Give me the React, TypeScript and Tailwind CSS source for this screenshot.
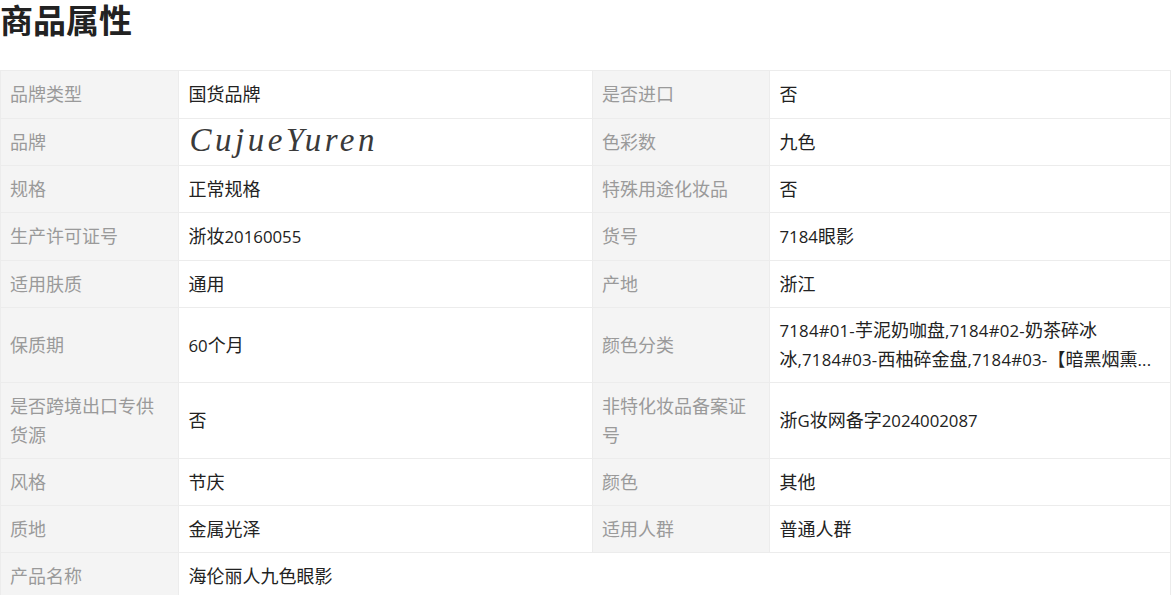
import React from 'react';

const FONT = "font-['Roboto','Noto_Sans_CJK_SC',sans-serif]";

interface Prop {
  label: string;
  value: React.ReactNode;
}

// digits and latin run a little narrower than the CJK text around them
function L({ children }: { children: React.ReactNode }) {
  return <span className="font-['Open_Sans',sans-serif] text-[16.8px]">{children}</span>;
}

const rows: Prop[][] = [
  [{ label: '品牌类型', value: '国货品牌' }, { label: '是否进口', value: '否' }],
  [
    {
      label: '品牌',
      value: (
        <span className="ml-px block h-[28.8px] font-['Liberation_Serif',serif] text-[33px]/[22px] italic tracking-[3.5px] text-[#3a3a3a]">
          CujueYuren
        </span>
      ),
    },
    { label: '色彩数', value: '九色' },
  ],
  [{ label: '规格', value: '正常规格' }, { label: '特殊用途化妆品', value: '否' }],
  [
    { label: '生产许可证号', value: <>浙妆<L>20160055</L></> },
    { label: '货号', value: <><L>7184</L>眼影</> },
  ],
  [{ label: '适用肤质', value: '通用' }, { label: '产地', value: '浙江' }],
  [
    { label: '保质期', value: <><L>60</L>个月</> },
    {
      label: '颜色分类',
      value: (
        <span className="block [&_span]:tracking-[0.2px]">
          <L>7184#01-</L>芋泥奶咖盘<L>,7184#02-</L>奶茶碎冰冰<L>,7184#03-</L>西柚碎金盘<L>,7184#03-</L>【暗黑烟熏<L>...</L>
        </span>
      ),
    },
  ],
  [
    { label: '是否跨境出口专供货源', value: '否' },
    { label: '非特化妆品备案证号', value: <>浙<L>G</L>妆网备字<L>2024002087</L></> },
  ],
  [{ label: '风格', value: '节庆' }, { label: '颜色', value: '其他' }],
  [{ label: '质地', value: '金属光泽' }, { label: '适用人群', value: '普通人群' }],
];

const rowHeights = [
  'h-[48px]',
  'h-[47px]',
  'h-[47px]',
  'h-[48px]',
  'h-[47px]',
  'h-[75px]',
  'h-[76px]',
  'h-[47px]',
  'h-[47px]',
];

function Label({ children }: { children: React.ReactNode }) {
  return (
    <th className="border border-[#ececec] bg-[#f4f4f4] pt-[9px] pr-5 pb-[7px] pl-[9px] text-left align-middle font-normal text-[#9a9a9a]">
      {children}
    </th>
  );
}

function Value({ children, colSpan }: { children: React.ReactNode; colSpan?: number }) {
  return (
    <td colSpan={colSpan} className="border border-[#ececec] pt-[9px] pr-[18px] pb-[7px] pl-[9.5px] align-middle text-[#222]">
      {children}
    </td>
  );
}

export default function App() {
  return (
    <div className={`h-[595px] w-[1171px] overflow-hidden bg-white ${FONT}`}>
      <h2 className="h-[70px] pt-px text-[33px]/[42px] font-bold text-[#222]">商品属性</h2>
      <table className="w-full table-fixed border-collapse text-[18px]/[28.8px]">
        <colgroup>
          <col className="w-[178px]" />
          <col className="w-[414px]" />
          <col className="w-[177px]" />
          <col />
        </colgroup>
        <tbody>
          {rows.map((row, i) => (
            <tr key={i} className={rowHeights[i]}>
              {row.map((p) => (
                <React.Fragment key={p.label}>
                  <Label>{p.label}</Label>
                  <Value>{p.value}</Value>
                </React.Fragment>
              ))}
            </tr>
          ))}
          <tr className="h-[47px]">
            <Label>产品名称</Label>
            <Value colSpan={3}>海伦丽人九色眼影</Value>
          </tr>
        </tbody>
      </table>
    </div>
  );
}
